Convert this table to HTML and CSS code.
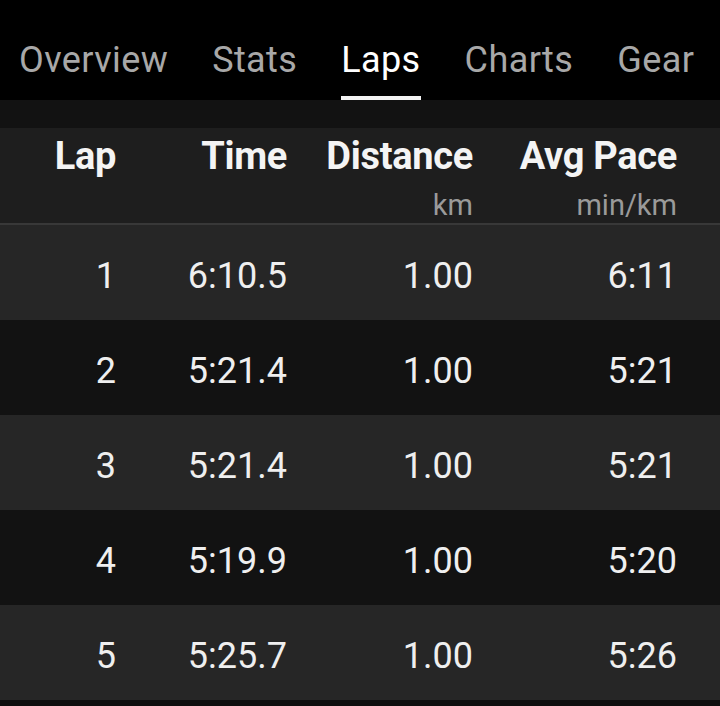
FILE: index.html
```html
<!DOCTYPE html>
<html>
<head>
<meta charset="utf-8">
<link rel="stylesheet" href="styles.css">
</head>
<body>
<nav class="tabs">
  <div class="tab"><span class="tab-label">Overview</span></div>
  <div class="tab"><span class="tab-label">Stats</span></div>
  <div class="tab active"><span class="tab-label">Laps</span></div>
  <div class="tab"><span class="tab-label">Charts</span></div>
  <div class="tab"><span class="tab-label">Gear</span></div>
</nav>
<div class="band"></div>
<div class="laps">
  <div class="row head">
    <div class="cell"><span class="title">Lap</span><span class="unit">&nbsp;</span></div>
    <div class="cell"><span class="title">Time</span><span class="unit">&nbsp;</span></div>
    <div class="cell"><span class="title">Distance</span><span class="unit">km</span></div>
    <div class="cell"><span class="title">Avg Pace</span><span class="unit">min/km</span></div>
  </div>
  <div class="row data odd"><div class="cell">1</div><div class="cell">6:10.5</div><div class="cell">1.00</div><div class="cell">6:11</div></div>
  <div class="row data even"><div class="cell">2</div><div class="cell">5:21.4</div><div class="cell">1.00</div><div class="cell">5:21</div></div>
  <div class="row data odd"><div class="cell">3</div><div class="cell">5:21.4</div><div class="cell">1.00</div><div class="cell">5:21</div></div>
  <div class="row data even"><div class="cell">4</div><div class="cell">5:19.9</div><div class="cell">1.00</div><div class="cell">5:20</div></div>
  <div class="row data odd"><div class="cell">5</div><div class="cell">5:25.7</div><div class="cell">1.00</div><div class="cell">5:26</div></div>
</div>
</body>
</html>
```
FILE: styles.css
```css
html, body {
  margin: 0;
  padding: 0;
  background: #0e0e0e;
  font-family: Roboto, "Liberation Sans", sans-serif;
  overflow: hidden;
}
.tabs {
  display: flex;
  gap: 44px;
  padding-left: 19px;
  height: 100px;
  background: #000;
  box-sizing: border-box;
}
.tab {
  display: flex;
  flex-direction: column;
  padding-top: 42px;
  color: #a8a8a8;
  font-size: 36px;
  line-height: 36px;
  letter-spacing: 0.4px;
  white-space: nowrap;
}
.tab::after {
  content: "";
  display: block;
  height: 4px;
  margin-top: 18px;
}
.tab.active {
  color: #fff;
}
.tab.active::after {
  background: #f2f2f2;
}
.band {
  height: 28px;
  background: #121212;
}
.row {
  display: grid;
  grid-template-columns: 116px 171px 186px 204px;
  box-sizing: border-box;
}
.cell {
  text-align: right;
  display: flex;
  flex-direction: column;
  align-items: flex-end;
}
.head {
  height: 97px;
  padding-top: 9px;
  background: #1e1e1e;
  border-bottom: 2px solid #383838;
}
.title {
  color: #f4f4f4;
  font-weight: 700;
  font-size: 38px;
  line-height: 38px;
  letter-spacing: -0.3px;
}
.unit {
  color: #9a9a9a;
  font-size: 29px;
  line-height: 28px;
  margin-top: 16px;
}
.data {
  height: 95px;
  padding-top: 33px;
  color: #efefef;
  font-size: 36px;
  line-height: 36px;
}
.odd { background: #262626; }
.even { background: #121212; }
```
